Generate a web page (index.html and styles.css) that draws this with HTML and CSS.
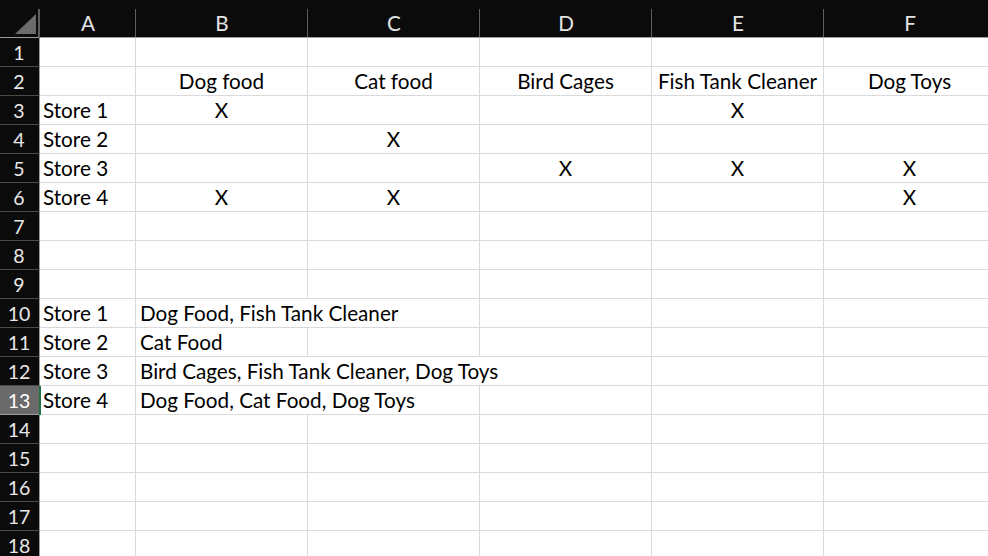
FILE: index.html
```html
<!DOCTYPE html>
<html>
<head>
<meta charset="utf-8">
<link rel="stylesheet" href="styles.css">
</head>
<body>
<table class="sheet">
  <colgroup>
    <col class="c-rh"><col class="c-a"><col class="c-w"><col class="c-w"><col class="c-w"><col class="c-w"><col class="c-w">
  </colgroup>
  <thead>
    <tr class="colhead">
      <th class="corner"><span class="tri"></span></th>
      <th>A</th><th>B</th><th>C</th><th>D</th><th>E</th><th>F</th>
    </tr>
  </thead>
  <tbody>
    <tr><th>1</th><td></td><td></td><td></td><td></td><td></td><td></td></tr>
    <tr><th>2</th><td></td><td class="ctr">Dog food</td><td class="ctr">Cat food</td><td class="ctr">Bird Cages</td><td class="ctr">Fish Tank Cleaner</td><td class="ctr">Dog Toys</td></tr>
    <tr><th>3</th><td>Store 1</td><td class="ctr">X</td><td></td><td></td><td class="ctr">X</td><td></td></tr>
    <tr><th>4</th><td>Store 2</td><td></td><td class="ctr">X</td><td></td><td></td><td></td></tr>
    <tr><th>5</th><td>Store 3</td><td></td><td></td><td class="ctr">X</td><td class="ctr">X</td><td class="ctr">X</td></tr>
    <tr><th>6</th><td>Store 4</td><td class="ctr">X</td><td class="ctr">X</td><td></td><td></td><td class="ctr">X</td></tr>
    <tr><th>7</th><td></td><td></td><td></td><td></td><td></td><td></td></tr>
    <tr><th>8</th><td></td><td></td><td></td><td></td><td></td><td></td></tr>
    <tr><th>9</th><td></td><td></td><td></td><td></td><td></td><td></td></tr>
    <tr><th>10</th><td>Store 1</td><td colspan="2">Dog Food, Fish Tank Cleaner</td><td></td><td></td><td></td></tr>
    <tr><th>11</th><td>Store 2</td><td class="pl">Cat Food</td><td></td><td></td><td></td><td></td></tr>
    <tr><th>12</th><td>Store 3</td><td colspan="3">Bird Cages, Fish Tank Cleaner, Dog Toys</td><td></td><td></td></tr>
    <tr class="sel"><th>13</th><td>Store 4</td><td colspan="2">Dog Food, Cat Food, Dog Toys</td><td></td><td></td><td></td></tr>
    <tr><th>14</th><td></td><td></td><td></td><td></td><td></td><td></td></tr>
    <tr><th>15</th><td></td><td></td><td></td><td></td><td></td><td></td></tr>
    <tr><th>16</th><td></td><td></td><td></td><td></td><td></td><td></td></tr>
    <tr><th>17</th><td></td><td></td><td></td><td></td><td></td><td></td></tr>
    <tr><th>18</th><td></td><td></td><td></td><td></td><td></td><td></td></tr>
  </tbody>
</table>
</body>
</html>
```
FILE: styles.css
```css
html, body {
  margin: 0;
  padding: 0;
  background: #ffffff;
  overflow: hidden;
  width: 988px;
  height: 556px;
}
.sheet {
  border-collapse: separate;
  border-spacing: 0;
  table-layout: fixed;
  width: 996px;
  font-family: Lato, "Open Sans", sans-serif;
  font-size: 20.7px;
  color: #000;
}
.c-rh { width: 40px; }
.c-a { width: 96px; }
.c-w { width: 172px; }

.colhead th {
  height: 37px;
  padding: 10px 0 0 0;
  box-sizing: border-box;
  background: #0b0b0b;
  color: #e4e4e4;
  font-weight: normal;
  text-align: center;
  border-bottom: 1px solid #9c9c9c;
  position: relative;
  line-height: 27px;
}
.colhead th + th::before {
  content: "";
  position: absolute;
  left: -1px;
  top: 9px;
  bottom: 0;
  width: 1px;
  background: #5e5e5e;
}
.colhead th.corner::after {
  content: "";
  position: absolute;
  right: 0;
  top: 9px;
  bottom: 0;
  width: 1px;
  background: #5e5e5e;
}
.colhead .corner { border-right: 1px solid #0b0b0b; }
.tri {
  position: absolute;
  left: 15px;
  top: 14px;
  width: 21px;
  height: 20px;
  background: #6b6b6b;
  clip-path: polygon(100% 0, 100% 100%, 0 100%);
}

tbody th {
  background: #0b0b0b;
  color: #e8e8e8;
  font-weight: normal;
  font-size: 19.5px;
  text-align: center;
  height: 29px;
  box-sizing: border-box;
  padding: 1px 1px 0 0;
  border-bottom: 1px solid #4a4a4a;
  border-right: 1px solid #9c9c9c;
  position: relative;
  line-height: 27px;
}
tbody td {
  height: 29px;
  box-sizing: border-box;
  padding: 1px 3px 0 3px;
  border-right: 1px solid #dadada;
  border-bottom: 1px solid #dadada;
  white-space: nowrap;
  line-height: 27px;
  overflow: hidden;
}
tbody td.ctr { text-align: center; padding-left: 0; padding-right: 0; }
tbody td[colspan], tbody td.pl { padding-left: 4px; }

.sel th {
  background: #6a6a6a;
  color: #ffffff;
  border-bottom-color: #9c9c9c;
}
.sel th::after {
  content: "";
  position: absolute;
  right: -2px;
  top: 0;
  bottom: -1px;
  width: 2px;
  background: #217346;
}
```
